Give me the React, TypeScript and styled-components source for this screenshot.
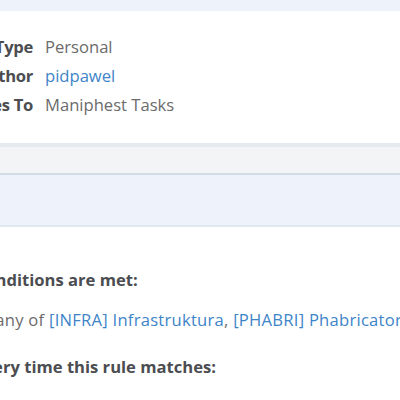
import styled, { createGlobalStyle } from 'styled-components';

const GlobalStyle = createGlobalStyle`
  html, body {
    margin: 0;
    padding: 0;
    background: #ffffff;
    overflow: hidden;
  }
  body {
    font-family: "Open Sans", "Noto Sans", sans-serif;
    font-size: 16.6px;
    color: #6b6b6b;
  }
`;

const Page = styled.div`
  width: 400px;
  height: 400px;
  overflow: hidden;
`;

const TopBar = styled.div`
  height: 11px;
  background: #eef3fb;
`;

const PropertyList = styled.dl`
  display: grid;
  grid-template-columns: 120px auto;
  column-gap: 12px;
  margin: 0 0 0 -87px;
  padding: 21px 0 24px;
`;

const Label = styled.dt`
  font-weight: 700;
  color: #4b4d51;
  text-align: right;
  line-height: 29px;
  letter-spacing: -0.3px;
`;

const Value = styled.dd`
  margin: 0;
  line-height: 29px;
  color: #6b6b6b;
`;

const Link = styled.a`
  color: #3e84c8;
  text-decoration: none;
`;

const HeaderBand = styled.div`
  height: 26px;
  background: #f3f4f6;
  border-top: 4px solid #e5eaf0;
  border-bottom: 2px solid #d3dbe5;
`;

const InfoBand = styled.div`
  height: 50px;
  background: #edf2fb;
  border-bottom: 2px solid #e2e8f0;
`;

const RuleBody = styled.div`
  padding-top: 41px;
  white-space: nowrap;
`;

const Heading = styled.div<{ $shift: number }>`
  margin-left: ${(p) => p.$shift}px;
  font-weight: 700;
  color: #4b4d51;
  line-height: 24px;
`;

const Line = styled.div<{ $shift: number }>`
  margin: 16px 0 23px ${(p) => p.$shift}px;
  line-height: 24px;
  letter-spacing: 0.25px;
  color: #6b6b6b;
`;

export default function App() {
  return (
    <Page>
      <GlobalStyle />
      <TopBar />
      <PropertyList>
        <Label>Rule Type</Label>
        <Value>Personal</Value>
        <Label>Author</Label>
        <Value>
          <Link href="#">pidpawel</Link>
        </Value>
        <Label>Applies To</Label>
        <Value>Maniphest Tasks</Value>
      </PropertyList>
      <HeaderBand />
      <InfoBand />
      <RuleBody>
        <Heading $shift={-171}>When all of these conditions are met:</Heading>
        <Line $shift={-108}>
          Tags include any of <Link href="#">[INFRA] Infrastruktura</Link>,{' '}
          <Link href="#">[PHABRI] Phabricator</Link>
        </Line>
        <Heading $shift={-185}>Take these actions every time this rule matches:</Heading>
        <Line $shift={-108}>Send an email to pidpawel.</Line>
      </RuleBody>
    </Page>
  );
}
